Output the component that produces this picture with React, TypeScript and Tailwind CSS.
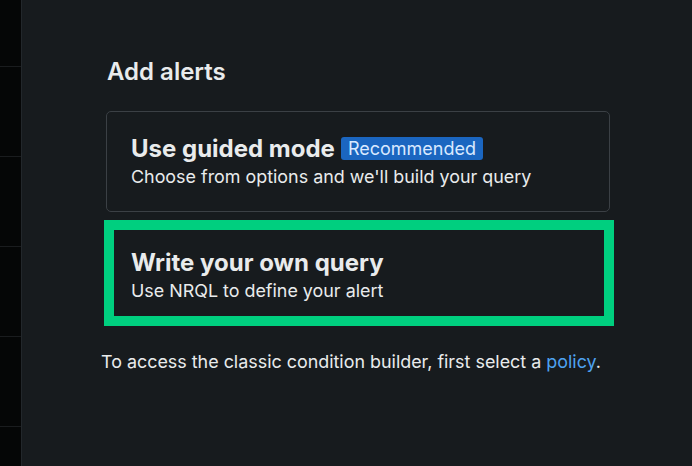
export default function App() {
  const rows = [0, 1, 2, 3, 4, 5];
  return (
    <div
      className="flex h-[466px] w-[692px] overflow-hidden bg-[#171b1e] text-[#e9ebec]"
      style={{ fontFamily: "Inter, 'Noto Sans', sans-serif" }}
    >
      {/* Side rail */}
      <div className="flex w-[22px] shrink-0 flex-col border-r border-[#22272b] bg-[#050606]">
        {rows.map((r) => (
          <div key={r} className="h-[90px] shrink-0 border-b border-[#1a1c1e] first:h-[67px]" />
        ))}
      </div>

      {/* Main */}
      <div className="flex-1 pl-[79px] pt-[58px]">
        <h2 className="ml-[6px] text-[24px] font-semibold leading-[28px]">Add alerts</h2>

        <div className="ml-[5px] mt-[25px] flex h-[101px] w-[504px] flex-col justify-center rounded-[5px] border border-[#3b4045] px-[24px]">
          <div className="flex items-center gap-[6px]">
            <span className="text-[24px] font-bold leading-[30px]">Use guided mode</span>
            <span className="rounded-[3px] bg-[#1b66c0] px-[7px] text-[18px] leading-[23px] text-[#d9e9ff]">
              Recommended
            </span>
          </div>
          <div className="text-[17.9px] leading-[26px]">
            Choose from options and we'll build your query
          </div>
        </div>

        <div className="ml-[3px] mt-[8px] flex h-[106px] w-[510px] flex-col justify-center border-[10px] border-[#00cf7f] px-[17px] pt-[6px]">
          <div className="text-[24px] font-bold leading-[30px]">Write your own query</div>
          <div className="text-[17.9px] leading-[26px]">Use NRQL to define your alert</div>
        </div>

        <p className="mt-[23px] text-[17.9px] leading-[26px]">
          To access the classic condition builder, first select a{" "}
          <a className="text-[#4ea2f0]">policy</a>.
        </p>
      </div>
    </div>
  );
}
